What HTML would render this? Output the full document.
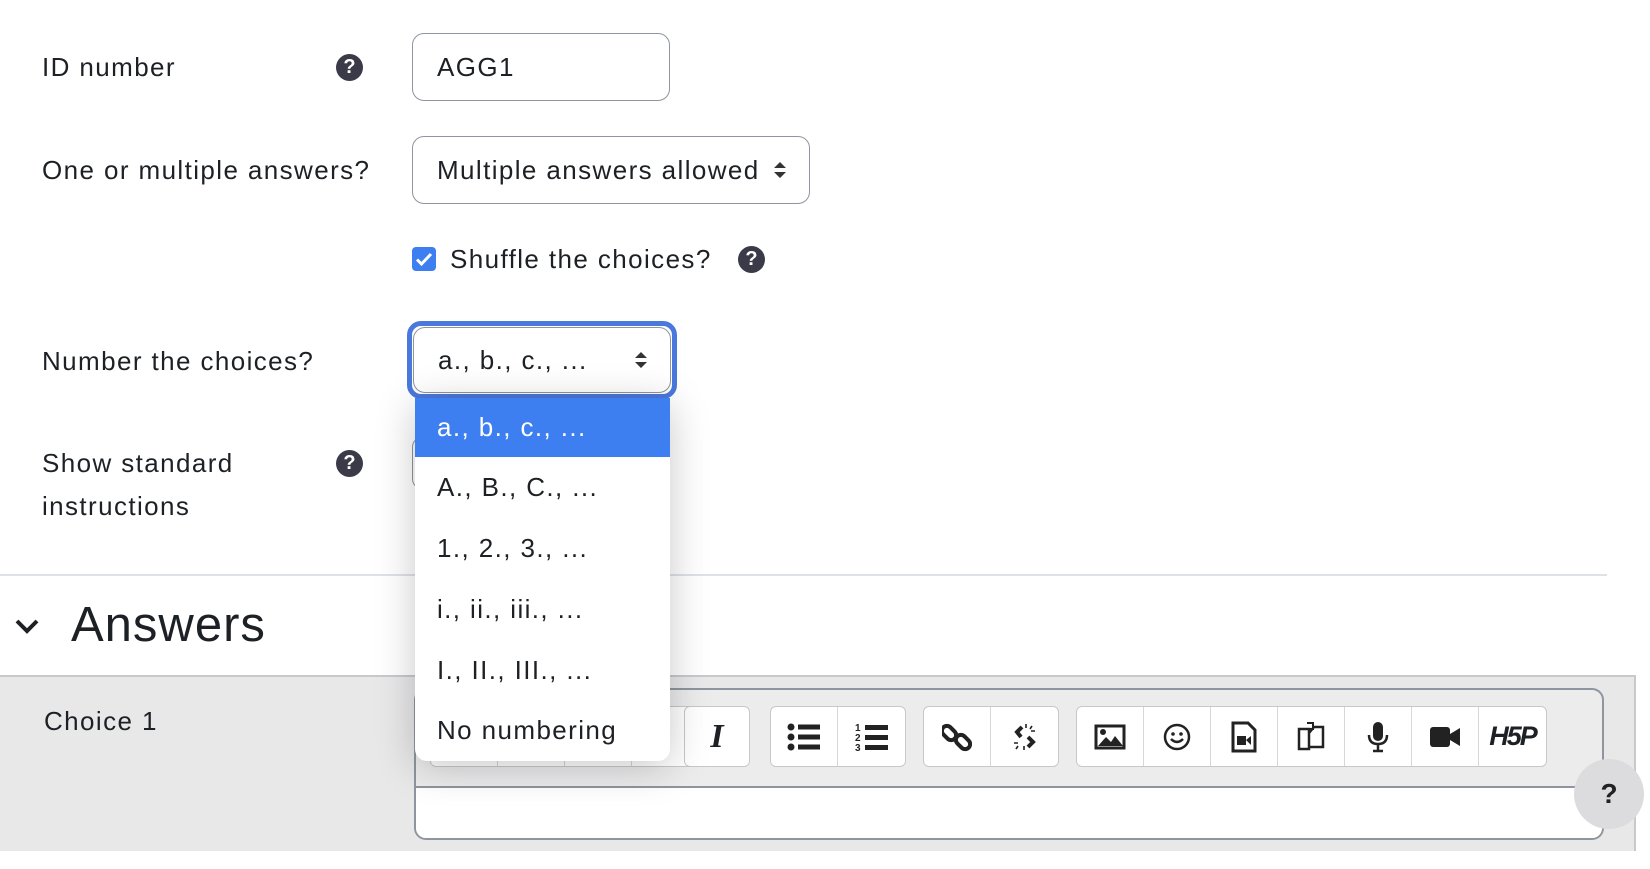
<!DOCTYPE html>
<html><head><meta charset="utf-8"><style>
*{box-sizing:border-box}
body{margin:0;width:1650px;height:869px;background:#fff;font-family:"Liberation Sans",sans-serif;color:#1d2125;position:relative;overflow:hidden}
.a{position:absolute}
.lbl{font-size:26px;line-height:30px;letter-spacing:1.4px}
.help{position:absolute;width:27px;height:27px;border-radius:50%;background:#3a3a48;color:#fff;font-weight:bold;font-size:20px;line-height:27px;text-align:center}
.box{position:absolute;border:1.5px solid #8f959e;border-radius:12px;background:#fff;font-size:26px;letter-spacing:1.4px;padding-left:24px;display:flex;align-items:center}
.arr{position:absolute;right:22px;top:50%;transform:translateY(-50%);width:14px;height:18px}
.item{position:absolute;left:0;width:100%;height:61px;font-size:26px;letter-spacing:1.4px;padding-left:22px;display:flex;align-items:center}
.btn{position:absolute;top:706px;height:61px;border:1.5px solid #c6c8cc;background:#fff;border-radius:6px;display:flex}
.btn div{width:67px;height:100%;border-right:1.5px solid #d5d7da;display:flex;align-items:center;justify-content:center}
.btn div:last-child{border-right:none}
</style></head><body>

<div class="a lbl" style="left:42px;top:52px">ID number</div>
<div class="help" style="left:336px;top:54px">?</div>
<div class="box" style="left:412px;top:33px;width:258px;height:68px">AGG1</div>

<div class="a lbl" style="left:42px;top:155px">One or multiple answers?</div>
<div class="box" style="left:412px;top:136px;width:398px;height:68px">Multiple answers allowed
<svg class="arr" viewBox="0 0 14 18"><path d="M7 1L13 7H1Z M7 17L13 11H1Z" fill="#333"/></svg></div>

<div class="a" style="left:412px;top:247px;width:24px;height:24px;background:#3d7ef0;border-radius:4px">
<svg viewBox="0 0 24 24" width="24" height="24"><path d="M5 12.5l4.5 4.5L19 7" stroke="#fff" stroke-width="3" fill="none"/></svg></div>
<div class="a lbl" style="left:450px;top:244px">Shuffle the choices?</div>
<div class="help" style="left:738px;top:246px">?</div>

<div class="a lbl" style="left:42px;top:346px">Number the choices?</div>
<div class="a" style="left:407px;top:321px;width:270px;height:78px;border:5px solid #4a78dc;border-radius:14px"></div>
<div class="box" style="left:413px;top:327px;width:258px;height:66px;border-color:#8f959e">a., b., c., ...
<svg class="arr" viewBox="0 0 14 18"><path d="M7 1L13 7H1Z M7 17L13 11H1Z" fill="#333"/></svg></div>

<div class="a lbl" style="left:42px;top:448px">Show standard</div>
<div class="a lbl" style="left:42px;top:491px">instructions</div>
<div class="help" style="left:336px;top:450px">?</div>
<div class="a" style="left:412px;top:437px;width:10px;height:52px;border:1.5px solid #8f959e;border-right:none;border-radius:12px 0 0 12px"></div>

<div class="a" style="left:0;top:574px;width:1607px;height:2px;background:#dee2e6"></div>
<svg class="a" style="left:14px;top:616px" width="26" height="20" viewBox="0 0 26 20"><path d="M3 5l10 10L23 5" stroke="#1d2125" stroke-width="4" fill="none"/></svg>
<div class="a" style="left:71px;top:597px;font-size:49px;line-height:56px;letter-spacing:1px">Answers</div>

<div class="a" style="left:0;top:675px;width:1636px;height:176px;background:#e8e8e9;border-top:2px solid #c8c9cc;border-right:2px solid #c8c9cc"></div>
<div class="a lbl" style="left:44px;top:706px">Choice 1</div>
<div class="a" style="left:414px;top:688px;width:1190px;height:152px;border:2px solid #8f959e;border-radius:12px;background:#ececed;overflow:hidden">
 <div class="a" style="left:0;top:96px;width:100%;height:60px;background:#fff;border-top:2px solid #8f959e"></div>
</div>
<div class="btn" style="left:430px"><div></div><div></div><div></div><div></div></div>
<div class="btn" style="left:684px;width:66px"><div style="font-family:'Liberation Serif',serif;font-style:italic;font-weight:bold;font-size:34px">I</div></div>
<div class="btn" style="left:770px"><div>
<svg width="34" height="28" viewBox="0 0 34 28"><circle cx="4" cy="4" r="3.5" fill="#222"/><circle cx="4" cy="14" r="3.5" fill="#222"/><circle cx="4" cy="24" r="3.5" fill="#222"/><rect x="11" y="1.5" width="22" height="5" fill="#222"/><rect x="11" y="11.5" width="22" height="5" fill="#222"/><rect x="11" y="21.5" width="22" height="5" fill="#222"/></svg></div><div>
<svg width="34" height="30" viewBox="0 0 34 30"><text x="0" y="9" font-size="10" font-weight="bold" fill="#222">1</text><text x="0" y="19" font-size="10" font-weight="bold" fill="#222">2</text><text x="0" y="29" font-size="10" font-weight="bold" fill="#222">3</text><rect x="10" y="3" width="23" height="5" fill="#222"/><rect x="10" y="13" width="23" height="5" fill="#222"/><rect x="10" y="23" width="23" height="5" fill="#222"/></svg></div></div>
<div class="btn" style="left:923px"><div>
<svg width="30" height="30" viewBox="0 0 30 30"><rect x="2" y="3" width="10" height="16" rx="5" transform="rotate(-45 7 11)" fill="none" stroke="#222" stroke-width="4"/><rect x="16" y="12" width="10" height="16" rx="5" transform="rotate(-45 21 20)" fill="none" stroke="#222" stroke-width="4"/></svg></div><div>
<svg width="30" height="30" viewBox="0 0 30 30"><path d="M12 5 L7 10 L11 15 M18 15 L23 20 L18 25" stroke="#222" stroke-width="4" fill="none"/><path d="M16 2v4M22 4l-2 3M25 9h-4M4 21h4M6 27l2-3M14 28v-4" stroke="#222" stroke-width="1.6"/></svg></div></div>
<div class="btn" style="left:1076px">
<div><svg width="32" height="26" viewBox="0 0 32 26"><rect x="2" y="2" width="28" height="22" fill="none" stroke="#222" stroke-width="3"/><circle cx="9" cy="8" r="3" fill="#222"/><path d="M4 22L12 13l5 5 4-6 8 10Z" fill="#222"/></svg></div>
<div><svg width="30" height="30" viewBox="0 0 30 30"><circle cx="15" cy="15" r="12" fill="none" stroke="#222" stroke-width="2.5"/><circle cx="11" cy="12" r="1.8" fill="#222"/><circle cx="19" cy="12" r="1.8" fill="#222"/><path d="M9 17q6 6 12 0" stroke="#222" stroke-width="2.5" fill="none"/></svg></div>
<div><svg width="26" height="32" viewBox="0 0 26 32"><path d="M2 2h15l7 7v21H2Z" fill="none" stroke="#222" stroke-width="3"/><rect x="6" y="15" width="9" height="9" fill="#222"/><path d="M15 19l5-4v9Z" fill="#222"/></svg></div>
<div><svg width="30" height="32" viewBox="0 0 30 32"><path d="M3 8h10v20H3Z M13 12l5-6h9v20H13" fill="none" stroke="#222" stroke-width="2.5"/><path d="M11 2h6v6h-6" fill="none" stroke="#222" stroke-width="2"/></svg></div>
<div><svg width="22" height="32" viewBox="0 0 22 32"><rect x="6" y="1" width="10" height="19" rx="5" fill="#222"/><path d="M2 14q0 9 9 9t9-9M11 23v7M6 30h10" stroke="#222" stroke-width="2.5" fill="none"/></svg></div>
<div><svg width="32" height="24" viewBox="0 0 32 24"><rect x="1" y="2" width="20" height="20" rx="3" fill="#222"/><path d="M21 9l10-6v18l-10-6Z" fill="#222"/></svg></div>
<div style="font-weight:bold;font-size:27px;letter-spacing:-2px;font-style:italic">H5P</div>
</div>

<div class="a" style="left:1574px;top:759px;width:70px;height:70px;border-radius:50%;background:#dcdcde;font-weight:bold;font-size:28px;line-height:70px;text-align:center;color:#222">?</div>

<div class="a" style="left:415px;top:398px;width:255px;height:363px;background:#fff;border-radius:0 0 12px 12px;box-shadow:0 6px 40px rgba(0,0,0,.22);overflow:hidden">
 <div class="item" style="top:0;height:59px;background:#3d7ef0;color:#fff">a., b., c., ...</div>
 <div class="item" style="top:59px">A., B., C., ...</div>
 <div class="item" style="top:120px">1., 2., 3., ...</div>
 <div class="item" style="top:181px">i., ii., iii., ...</div>
 <div class="item" style="top:242px">I., II., III., ...</div>
 <div class="item" style="top:302px">No numbering</div>
</div>
</body></html>
